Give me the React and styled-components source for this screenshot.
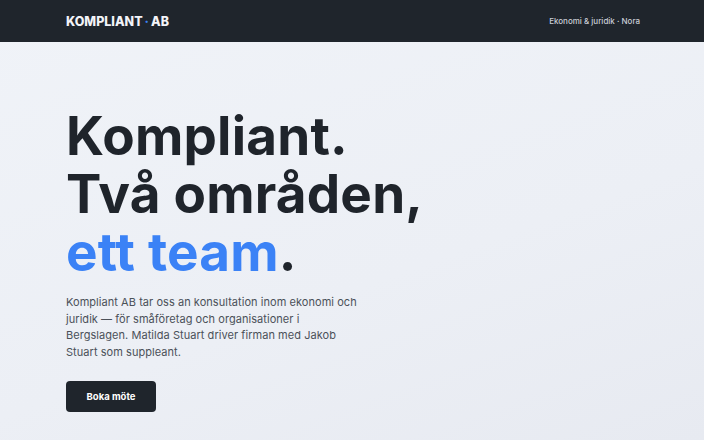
import React from 'react';
import styled, { createGlobalStyle } from 'styled-components';

const GlobalStyle = createGlobalStyle`
  html, body {
    margin: 0;
    padding: 0;
    height: 100%;
  }
  body {
    font-family: Inter, "Noto Sans", "Liberation Sans", sans-serif;
    background: #eef1f6;
  }
  * { box-sizing: border-box; }
`;

const App = () => {
  return (
    <>
      <GlobalStyle />
      <Page>
        <Header>
          <Logo>
            KOMPLIANT<LogoDot>·</LogoDot>AB
          </Logo>
          <Tagline>Ekonomi &amp; juridik · Nora</Tagline>
        </Header>
        <Hero>
          <Title>
            Kompliant.
            <br />
            Två områden,
            <br />
            <Accent>ett team</Accent>.
          </Title>
          <Lead>
            Kompliant AB tar oss an konsultation inom ekonomi och
            <br />
            juridik — för småföretag och organisationer i
            <br />
            Bergslagen. Matilda Stuart driver firman med Jakob
            <br />
            Stuart som suppleant.
          </Lead>
          <PrimaryButton>Boka möte</PrimaryButton>
        </Hero>
      </Page>
    </>
  );
};

export default App;

const Page = styled.div`
  min-height: 100vh;
  display: flex;
  flex-direction: column;
  background: linear-gradient(160deg, #f0f3f8 0%, #eceff5 60%, #e7eaf1 100%);
`;

const Header = styled.header`
  height: 42px;
  background-color: #1f252c;
  display: flex;
  align-items: center;
  justify-content: space-between;
  padding: 0 64px 0 66px;
`;

const Logo = styled.div`
  color: #f3f4f8;
  font-size: 12.5px;
  font-weight: 800;
`;

const LogoDot = styled.span`
  color: #3b82f6;
  margin: 0 2px;
`;

const Tagline = styled.div`
  color: #c9ced6;
  font-size: 8px;
  font-weight: 500;
`;

const Hero = styled.main`
  display: flex;
  flex-direction: column;
  align-items: flex-start;
  padding: 65px 66px 0;
`;

const Title = styled.h1`
  margin: 0;
  color: #1f242b;
  font-size: 53px;
  font-weight: 700;
  line-height: 58px;
  letter-spacing: 0.2px;
`;

const Accent = styled.span`
  color: #3b82f6;
`;

const Lead = styled.p`
  margin: 13px 0 0;
  color: #4b5159;
  font-size: 11px;
  line-height: 16.5px;
  letter-spacing: 0.05px;
`;

const PrimaryButton = styled.button`
  margin-top: 21px;
  width: 90px;
  height: 31px;
  border: none;
  border-radius: 4px;
  background-color: #1f252c;
  color: #ffffff;
  font-family: inherit;
  font-size: 9.5px;
  font-weight: 700;
  cursor: pointer;
`;
